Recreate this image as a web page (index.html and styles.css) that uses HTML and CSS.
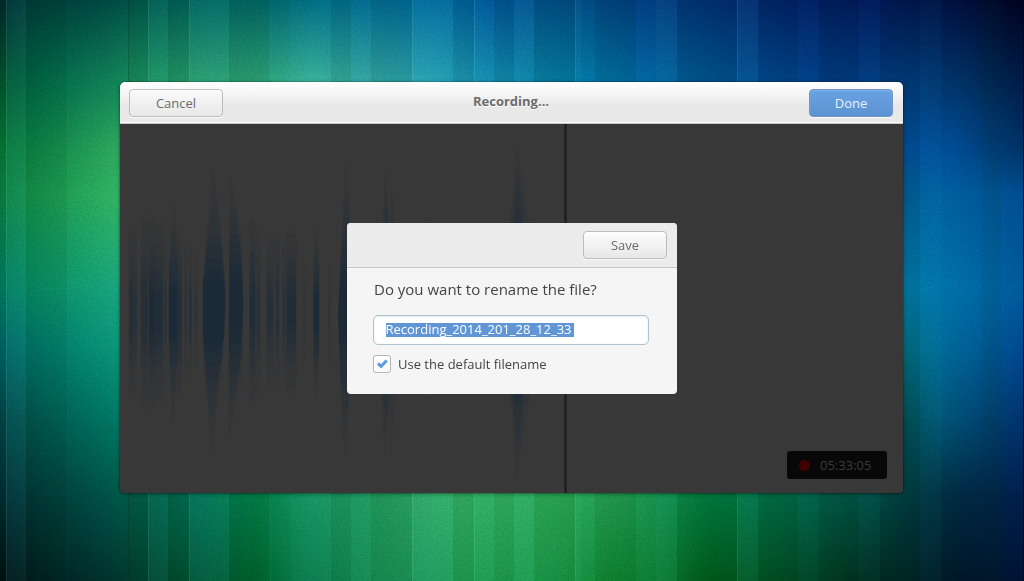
FILE: index.html
```
<!DOCTYPE html>
<html lang="en">
<head>
<meta charset="utf-8">
<title>Recording...</title>
<link rel="stylesheet" href="styles.css">
</head>
<body>
<div class="desktop">
  <div class="wallpaper" aria-hidden="true">
    <div class="tone tone-0"></div>
    <div class="tone tone-1"></div>
    <div class="tone tone-2"></div>
    <div class="tone tone-3"></div>
    <div class="tone tone-4"></div>
    <div class="tone tone-5"></div>
    <div class="tone tone-6"></div>
    <div class="tone tone-7"></div>
    <div class="tone tone-8"></div>
    <div class="stripes"></div>
    <svg class="grain" width="1024" height="581">
      <filter id="noise" x="0" y="0" width="100%" height="100%">
        <feTurbulence type="fractalNoise" baseFrequency="0.6" numOctaves="2" seed="4"/>
        <feColorMatrix values="0 0 0 0 0  0 0 0 0 0  0 0 0 0 0  1.2 0 0 0 -0.48"/>
      </filter>
      <rect width="1024" height="581" filter="url(#noise)"/>
    </svg>
  </div>
  <main class="window">
    <header class="titlebar">
      <button class="button cancel">Cancel</button>
      <h1 class="title">Recording...</h1>
      <button class="button done">Done</button>
    </header>
    <section class="recorder">
      <svg class="wave" width="446" height="369" viewBox="120 124 446 369" aria-hidden="true">
        <defs>
          <linearGradient id="fade" x1="0" y1="0" x2="0" y2="1">
            <stop offset="0" stop-color="#1f2c37" stop-opacity="0"/>
            <stop offset=".2" stop-color="#1f2c37" stop-opacity=".4"/>
            <stop offset=".4" stop-color="#1f2c37"/>
            <stop offset=".6" stop-color="#1f2c37"/>
            <stop offset=".8" stop-color="#1f2c37" stop-opacity=".4"/>
            <stop offset="1" stop-color="#1f2c37" stop-opacity="0"/>
          </linearGradient>
          <filter id="soft" filterUnits="userSpaceOnUse" x="120" y="124" width="446" height="369"><feGaussianBlur stdDeviation=".8 4"/></filter>
        </defs>
        <g fill="url(#fade)" filter="url(#soft)" transform="translate(1 21.8) scale(1 .93)">
          <rect x="128" y="225" width="4" height="174" opacity=".75"/>
          <rect x="132" y="223" width="4" height="178" opacity=".6"/>
          <rect x="140" y="210" width="7" height="204" opacity=".75"/>
          <rect x="148" y="210" width="6" height="206"/>
          <rect x="153" y="216" width="9" height="192" opacity=".85"/>
          <rect x="163" y="228" width="3" height="168" opacity=".45"/>
          <path d="M173 190L176 240L177 350L172 436L168 350L168 260Z"/>
          <rect x="175" y="222" width="6" height="180" opacity=".8"/>
          <rect x="184" y="235" width="2" height="150" opacity=".55"/>
          <rect x="188" y="238" width="3" height="148" opacity=".6"/>
          <rect x="194" y="250" width="3" height="120" opacity=".35"/>
          <path d="M212 155L219 215L225 290L224 335L218 385L211 468L206 390L202 335L202 285L206 240Z"/>
          <rect x="204" y="235" width="18" height="155"/>
          <path d="M229 163L235 200L240 240L243 300L241 350L236 400L228 447Z"/>
          <rect x="229" y="225" width="13" height="165" opacity=".9"/>
          <rect x="249" y="210" width="6" height="200" opacity=".9"/>
          <rect x="256" y="225" width="4" height="176" opacity=".6"/>
          <rect x="266" y="231" width="7" height="162" opacity=".65"/>
          <rect x="275" y="228" width="4" height="160" opacity=".7"/>
          <rect x="282" y="235" width="3" height="150" opacity=".6"/>
          <rect x="286" y="225" width="10" height="172" opacity=".9"/>
          <rect x="303" y="255" width="2" height="115" opacity=".25"/>
          <path d="M316 218L319 265L319 350L315 409L313 350L313 270Z"/>
          <rect x="328" y="260" width="3" height="110" opacity=".25"/>
          <path d="M346 150L350 220L356 315L349 400L345 473L341 400L338 315L342 230Z"/>
          <path d="M386 150L390 240L398 315L390 400L385 469L382 400L379 315L383 230Z"/>
          <path d="M391 170L402 315L391 465Z" opacity=".7"/>
          <rect x="425" y="205" width="2" height="210" opacity=".25"/>
          <path d="M518 125L524 230L529 312L524 395L518 500L513 395L507 312L514 230Z"/>
          <path d="M519 145L542 312L520 470L500 312Z" opacity=".6"/>
        </g>
      </svg>
      <div class="playhead"></div>
      <div class="timer"><span class="dot"></span><span>05:33:05</span></div>
    </section>
  </main>
  <section class="dialog">
    <header class="dialog-head"><button class="button save">Save</button></header>
    <div class="dialog-body">
      <h2 class="question">Do you want to rename the file?</h2>
      <div class="field"><span class="selected">Recording_2014_201_28_12_33</span></div>
      <div class="option">
        <span class="checkbox"><svg width="16" height="16" viewBox="0 0 16 16"><path d="M3.9 7.4L7.1 10.4L12.7 4.5" fill="none" stroke="#5e9ce0" stroke-width="3"/></svg></span>
        <span>Use the default filename</span>
      </div>
    </div>
  </section>
</div>
</body>
</html>
```
FILE: styles.css
```
* { box-sizing: border-box; }
body { margin: 0; font-family: "Open Sans", "Noto Sans", sans-serif; font-size: 13px; overflow: hidden; }
.desktop { position: relative; width: 1024px; height: 581px; padding: 82px 121px 88px 120px; overflow: hidden; }

/* Wallpaper: horizontal colour rows, each fading into the next one below */
.wallpaper, .tone, .stripes, .grain { position: absolute; inset: 0; }
.tone { -webkit-mask-image: linear-gradient(transparent var(--from), #000 var(--to)); mask-image: linear-gradient(transparent var(--from), #000 var(--to)); }
.tone-0 { -webkit-mask-image: none; mask-image: none; background: linear-gradient(90deg, #00262e 0, #003a3c 26px, #004943 100px, #005a50 150px, #006663 210px, #006669 260px, #006e88 320px, #006a98 390px, #0068a2 440px, #00549a 500px, #004c84 570px, #003c82 640px, #002d74 720px, #001e66 800px, #00175a 880px, #00103e 960px, #000420 1024px); }
.tone-1 { --from: 0px; --to: 82px; background: linear-gradient(90deg, #00552f 0, #006a4a 40px, #108058 100px, #1a9160 140px, #2a9f6e 200px, #2fa67c 260px, #3ab49c 310px, #34a8a4 370px, #27a4b4 430px, #1490b4 490px, #0a82a8 540px, #0078a8 590px, #0066a2 650px, #005293 720px, #004a94 760px, #003c86 830px, #003b80 900px, #003468 960px, #001c48 1024px); }
.tone-2 { --from: 82px; --to: 150px; background: linear-gradient(90deg, #087838 0, #10884a 40px, #249f58 90px, #30ae62 120px, #0050a0 903px, #00509a 950px, #003468 1024px); }
.tone-3 { --from: 150px; --to: 195px; background: linear-gradient(90deg, #0c8044 0, #189850 40px, #34b866 118px, #005e9c 903px, #0064a6 940px, #005094 1024px); }
.tone-4 { --from: 195px; --to: 290px; background: linear-gradient(90deg, #007c64 0, #089068 40px, #1ba982 118px, #007cac 903px, #0074ac 950px, #005ca0 1024px); }
.tone-5 { --from: 290px; --to: 350px; background: linear-gradient(90deg, #006468 0, #00786c 40px, #0c9a7c 118px, #006e84 903px, #006e9c 940px, #004a94 1024px); }
.tone-6 { --from: 350px; --to: 420px; background: linear-gradient(90deg, #004448 0, #005e54 50px, #007c66 118px, #005058 903px, #005878 940px, #003370 1024px); }
.tone-7 { --from: 420px; --to: 494px; background: linear-gradient(90deg, #002c34 0, #003f3d 50px, #005a4c 118px, #00624a 155px, #007456 200px, #04844c 260px, #189864 310px, #24a062 380px, #34b068 440px, #34b464 500px, #2cac58 560px, #24a054 620px, #108e4c 670px, #007e42 710px, #007448 760px, #00604a 820px, #005048 870px, #003c44 910px, #002c44 960px, #002050 1024px); }
.tone-8 { --from: 494px; --to: 581px; background: linear-gradient(90deg, #000e12 0, #002022 40px, #003430 110px, #00462e 155px, #005838 210px, #00642f 255px, #0a7c4c 300px, #148c54 360px, #209c5c 430px, #20a050 490px, #1c9c4c 550px, #108834 610px, #0c7c30 660px, #005c1c 710px, #005424 760px, #004026 820px, #002c20 870px, #002428 910px, #001828 960px, #001438 1024px); }
.stripes {
  --hi: rgba(90, 220, 210, .075); --mid: rgba(90, 220, 210, .03); --lo: rgba(0, 50, 5, .07); --edge: rgba(150, 255, 230, .15);
  background: linear-gradient(90deg,
    var(--lo) 6px, var(--edge) 6px 7px, var(--hi) 7px 26px, var(--lo) 26px 67px, var(--mid) 67px 68px, transparent 68px 128px,
    rgba(0,40,0,.25) 128px 129px, var(--lo) 129px 148px, var(--edge) 148px 149px, var(--hi) 149px 168px, var(--lo) 168px 189px,
    var(--edge) 189px 190px, var(--hi) 190px 229px, var(--lo) 229px 270px, var(--hi) 270px 271px, transparent 271px 290px, var(--mid) 290px 331px,
    var(--lo) 331px 351px, var(--mid) 351px 371px, var(--lo) 371px 412px, var(--edge) 412px 413px, var(--hi) 413px 453px,
    var(--lo) 453px 474px, var(--edge) 474px 475px, var(--mid) 475px 494px, var(--lo) 494px 514px, var(--hi) 514px 534px,
    var(--lo) 534px 575px, var(--edge) 575px 576px, var(--hi) 576px 581px, var(--mid) 581px 595px, var(--lo) 595px 636px,
    var(--mid) 636px 656px, var(--hi) 656px 677px, var(--lo) 677px 737px, var(--edge) 737px 738px, var(--hi) 738px 758px,
    var(--lo) 758px 798px, var(--mid) 798px 819px, var(--lo) 819px 859px, var(--mid) 859px 880px, var(--lo) 880px 920px,
    var(--mid) 920px 941px, transparent 941px 981px, var(--lo) 981px 1001px, transparent 1001px 1023px, #000814 1023px);
}
.grain { opacity: .18; }

.window { position: relative; display: flex; flex-direction: column; width: 783px; height: 411px; border-radius: 5px 5px 4px 4px; overflow: hidden; box-shadow: 0 0 0 1px rgba(0,0,0,.12), 0 1px 4px rgba(0,0,0,.4); }
.titlebar { display: grid; grid-template-columns: 94px 1fr 84px; align-items: start; height: 42px; padding: 7px 10px 0 9px; background: linear-gradient(#fff, #f2f2f2 35%, #e8e8e8 60%, #e9e9e9); border-bottom: 1px solid #c8c8c8; box-shadow: inset 0 -1px #fafafa; }
.title { margin: 0 10px 0 0; font-size: 13px; line-height: 24px; font-weight: 700; color: #6c6c6c; text-align: center; text-shadow: 0 1px #fff; }
.button { height: 28px; padding: 0 0 1px; border: 1px solid #bdbdbd; border-radius: 4px; background: linear-gradient(#fdfdfd, #e7e7e7); color: #6b6b6b; font: 13px/24px "Open Sans", "Noto Sans", sans-serif; text-align: center; box-shadow: inset 0 1px rgba(255,255,255,.7), 0 1px rgba(255,255,255,.7); }
.cancel { background: linear-gradient(#fafafa, #e8e8e8); }
.done { border-color: #7295c6; background: linear-gradient(#68a2e4, #5c92d0); color: #e9f1fa; box-shadow: inset 0 1px 2px rgba(150,190,240,.6), 0 1px rgba(255,255,255,.7); }
.recorder { flex: 1; display: flex; background: #383838; }
.wave { display: block; flex: none; width: 444px; }
.playhead { width: 3px; background: linear-gradient(90deg, #2c2c2c, #1c1c1c, #2a2a2a); }
.timer { display: flex; align-items: center; gap: 10px; width: 100px; height: 28px; margin: auto 16px 14px auto; padding: 0 0 0 12px; border-radius: 3px; background: #080808; color: #3b3b3b; font-size: 13px; }
.dot { width: 11px; height: 11px; border-radius: 50%; background: #400000; }

.dialog { position: absolute; left: 347px; top: 223px; width: 330px; height: 171px; border-radius: 4px; overflow: hidden; background: #f5f5f5; color: #444; }
.dialog-head { display: flex; justify-content: flex-end; height: 45px; padding: 8px 10px 0 0; background: #ececec; border-bottom: 1px solid #c8c8c8; }
.save { width: 84px; }
.dialog-body { padding: 11px 28px 0 26px; }
.question { margin: 0 0 15px 1px; font-size: 15px; line-height: 21px; font-weight: 400; white-space: nowrap; }
.field { display: flex; align-items: flex-start; height: 30px; padding: 7px 0 0 11.5px; border: 1px solid #adc3d2; border-radius: 5px; background: #fff; box-shadow: inset 0 1px 2px rgba(0,0,0,.08), inset 0 0 2px rgba(0,0,0,.06); }
.selected { padding-right: 2px; height: 14px; line-height: 13px; background: #6096d6; color: #fff; white-space: nowrap; }
.option { display: flex; align-items: center; gap: 7px; height: 18px; margin-top: 10px; line-height: 18px; }
.checkbox { width: 18px; height: 18px; border: 1px solid #b4b4b4; border-radius: 3px; background: linear-gradient(#fff, #fafafa); }
.checkbox svg { display: block; }
```
